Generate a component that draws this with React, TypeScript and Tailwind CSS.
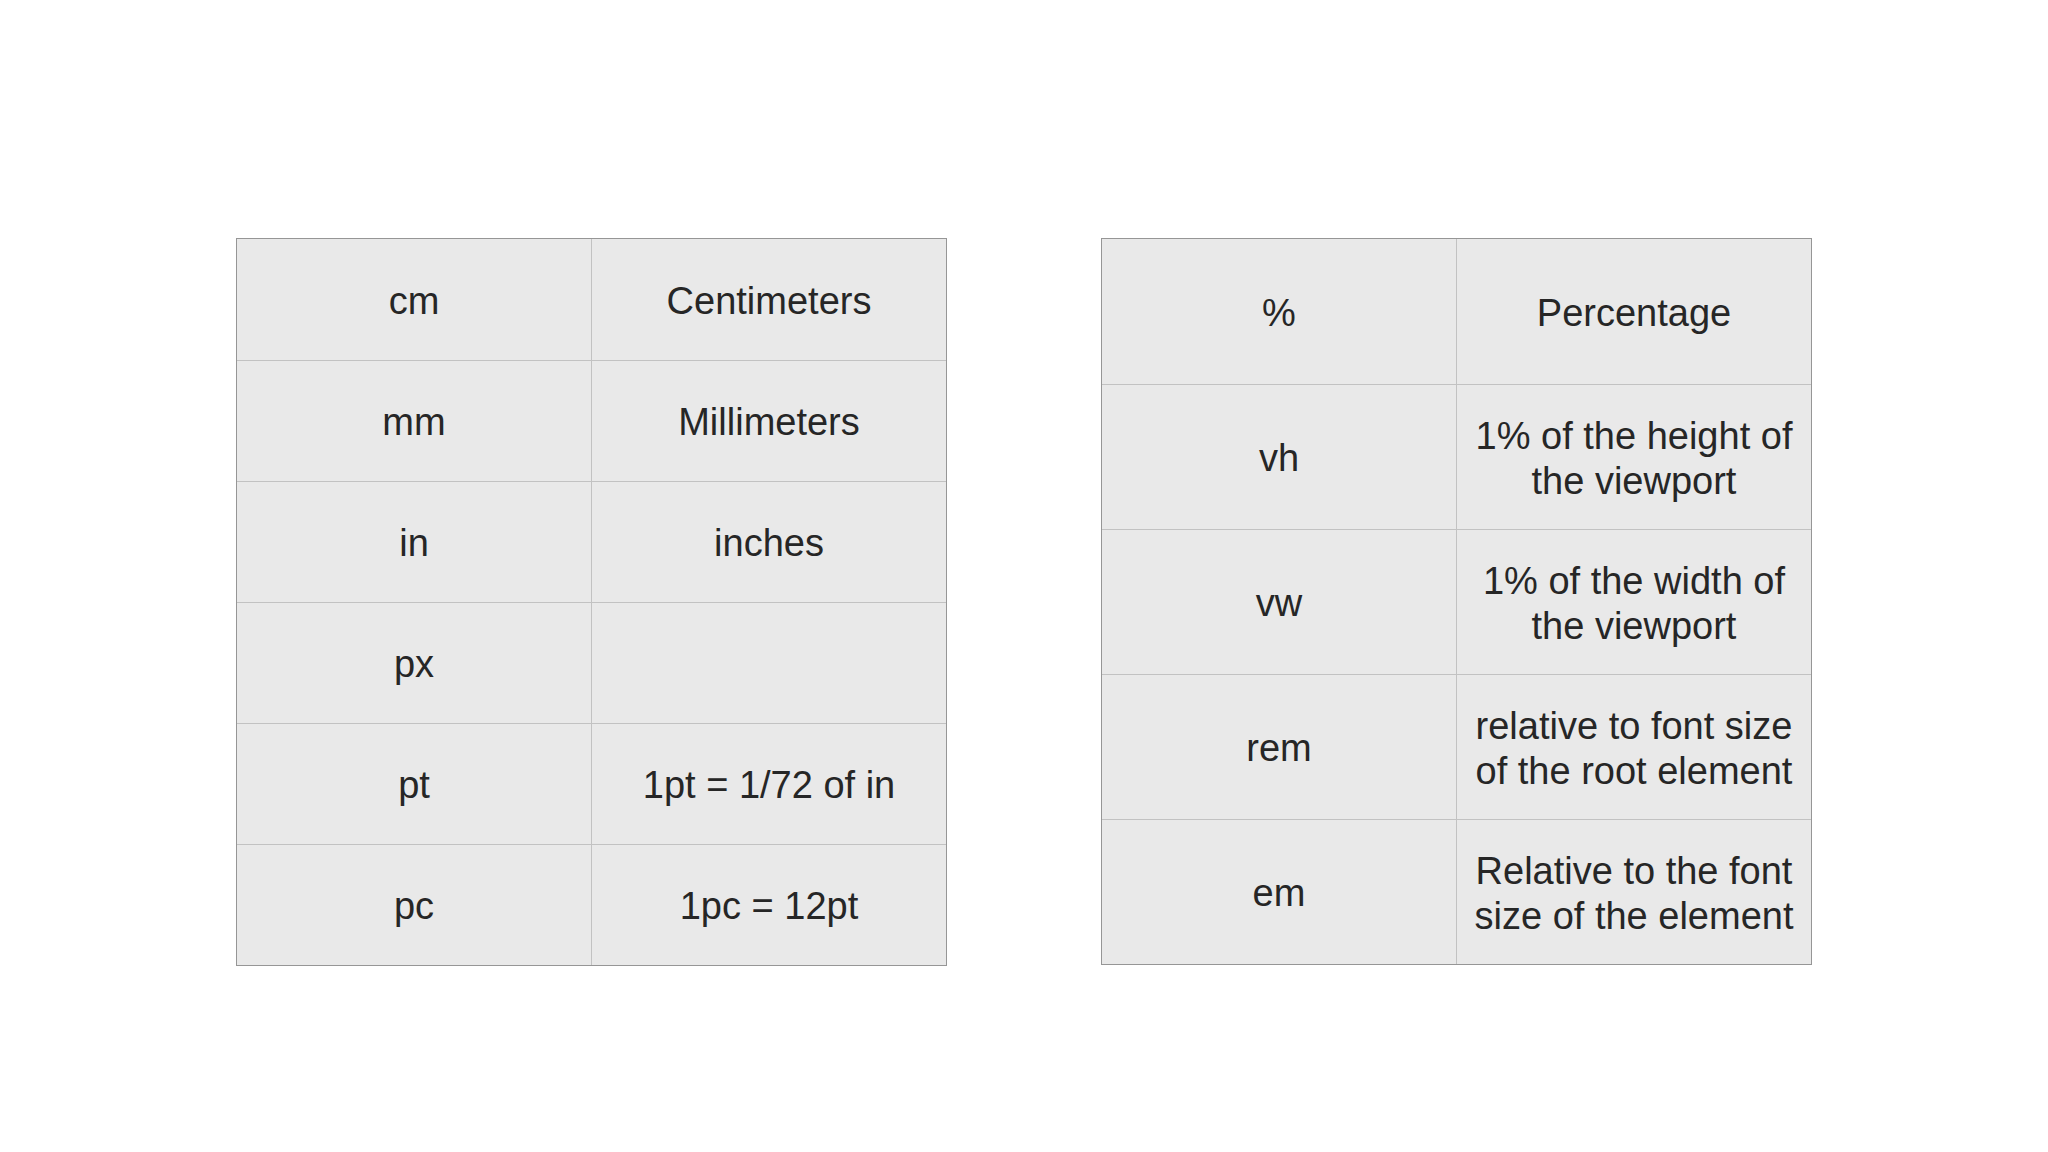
const leftRows: [string, string][] = [
  ["cm", "Centimeters"],
  ["mm", "Millimeters"],
  ["in", "inches"],
  ["px", ""],
  ["pt", "1pt = 1/72 of in"],
  ["pc", "1pc = 12pt"],
];

const rightRows: [string, string[]][] = [
  ["%", ["Percentage"]],
  ["vh", ["1% of the height of", "the viewport"]],
  ["vw", ["1% of the width of", "the viewport"]],
  ["rem", ["relative to font size", "of the root element"]],
  ["em", ["Relative to the font", "size of the element"]],
];

const UnitTable = ({
  rows,
  rowClass,
}: {
  rows: [string, string[]][];
  rowClass: string;
}) => (
  <div className="w-[711px] border border-[#969696] bg-[#e9e9e9]">
    {rows.map(([unit, desc], i) => (
      <div
        key={unit}
        className={`grid grid-cols-[355px_354px] ${rowClass} ${
          i > 0 ? "border-t border-[#c2c2c2]" : ""
        }`}
      >
        <div className="flex items-center justify-center border-r border-[#c2c2c2] pt-[3px]">
          {unit}
        </div>
        <div className="flex flex-col items-center justify-center pt-[3px] text-center">
          {desc.map((line) => (
            <span key={line} className="block">
              {line}
            </span>
          ))}
        </div>
      </div>
    ))}
  </div>
);

export default function App() {
  return (
    <div className="flex min-h-[1152px] w-[2048px] items-start justify-center gap-[154px] bg-white pt-[238px] font-['Liberation_Sans',Arial,sans-serif] text-[38px] leading-[45px] text-[#262626]">
      <UnitTable
        rows={leftRows.map(([u, d]) => [u, d ? [d] : []])}
        rowClass="h-[121px]"
      />
      <UnitTable rows={rightRows} rowClass="h-[145px]" />
    </div>
  );
}
